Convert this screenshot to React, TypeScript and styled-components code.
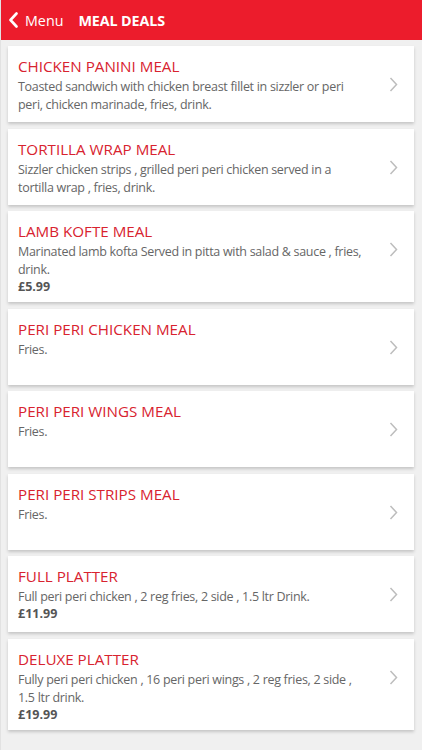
import React from "react";
import styled, { createGlobalStyle } from "styled-components";

const GlobalStyle = createGlobalStyle`
  html, body { margin: 0; padding: 0; background: #f0f0f0; }
  body { font-family: "Open Sans", "Noto Sans", sans-serif; -webkit-font-smoothing: antialiased; }
  * { box-sizing: border-box; }
`;

const Page = styled.div`
  min-height: 750px;
  background: #f0f0f0;
  border-left: 1px solid #e2e2e2;
`;

const Header = styled.header`
  height: 40px;
  background: #ec1c2c;
  display: flex;
  align-items: center;
  padding: 0 0 0 7px;
  color: #fff;
`;

const Back = styled.div`
  display: flex;
  align-items: center;
  gap: 6px;
  font-size: 14.3px;
  margin-right: 15px;
`;

const Title = styled.h1`
  margin: 0;
  font-size: 14.3px;
  font-weight: 700;
  letter-spacing: -0.1px;
`;

const List = styled.main`
  display: flex;
  flex-direction: column;
  gap: 6.5px;
  padding: 6px 8px 0 7px;
`;

const Card = styled.div`
  background: #fff;
  min-height: 76px;
  display: flex;
  align-items: flex-start;
  padding: 10px 16px 8px 10px;
  box-shadow: 0 2px 3px rgba(0, 0, 0, 0.18);
`;

const Body = styled.div`
  flex: 1;
  min-width: 0;
`;

const Name = styled.div`
  color: #d8232f;
  font-size: 15.2px;
  line-height: 20px;
`;

const Desc = styled.div`
  margin-top: 2px;
  color: #666;
  font-size: 12.5px;
  letter-spacing: -0.3px;
  line-height: 18px;
  padding-right: 22px;
`;

const Price = styled.div`
  color: #555;
  font-size: 12.5px;
  font-weight: 700;
  line-height: 15px;
`;

const Chevron = styled.svg`
  flex: none;
  margin-top: 21px;
  width: 9px;
  height: 15px;
`;

type Meal = { name: string; desc: string; price?: string };

const meals: Meal[] = [
  { name: "CHICKEN PANINI MEAL", desc: "Toasted sandwich with chicken breast fillet in sizzler or peri peri, chicken marinade, fries, drink." },
  { name: "TORTILLA WRAP MEAL", desc: "Sizzler chicken strips , grilled peri peri chicken served in a tortilla wrap , fries, drink." },
  { name: "LAMB KOFTE MEAL", desc: "Marinated lamb kofta Served in pitta with salad & sauce , fries, drink.", price: "£5.99" },
  { name: "PERI PERI CHICKEN MEAL", desc: "Fries." },
  { name: "PERI PERI WINGS MEAL", desc: "Fries." },
  { name: "PERI PERI STRIPS MEAL", desc: "Fries." },
  { name: "FULL PLATTER", desc: "Full peri peri chicken , 2 reg fries, 2 side , 1.5 ltr Drink.", price: "£11.99" },
  { name: "DELUXE PLATTER", desc: "Fully peri peri chicken , 16 peri peri wings , 2 reg fries, 2 side , 1.5 ltr drink.", price: "£19.99" },
];

export default function App() {
  return (
    <Page>
      <GlobalStyle />
      <Header>
        <Back>
          <svg width="11" height="16" viewBox="0 0 11 16">
            <path d="M8.5 1.5 L2.5 8 L8.5 14.5" fill="none" stroke="#fff" strokeWidth="2.6" strokeLinecap="round" strokeLinejoin="round" />
          </svg>
          <span>Menu</span>
        </Back>
        <Title>MEAL DEALS</Title>
      </Header>
      <List>
        {meals.map((m) => (
          <Card key={m.name}>
            <Body>
              <Name>{m.name}</Name>
              <Desc>{m.desc}</Desc>
              {m.price && <Price>{m.price}</Price>}
            </Body>
            <Chevron viewBox="0 0 9 15">
              <path d="M1.5 1 L7.5 7.5 L1.5 14" fill="none" stroke="#bdbdbd" strokeWidth="1.5" />
            </Chevron>
          </Card>
        ))}
      </List>
    </Page>
  );
}
